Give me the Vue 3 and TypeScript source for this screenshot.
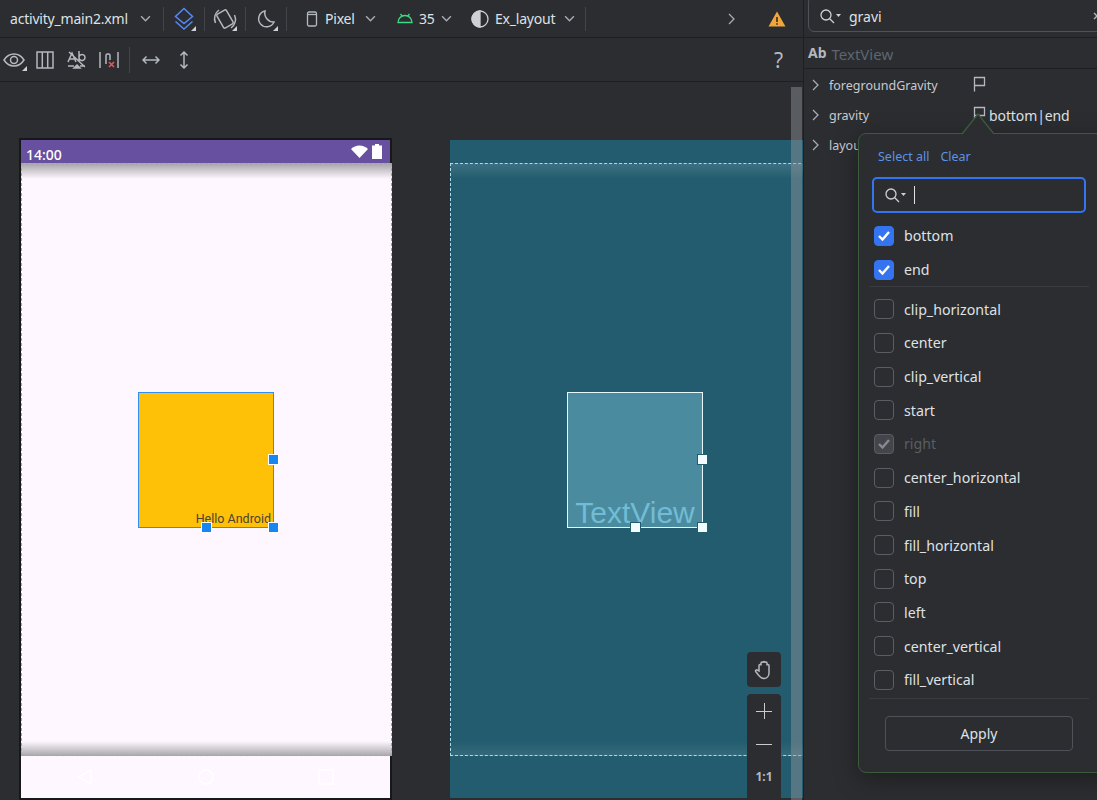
<template>
  <div class="ide">
    <section class="editor">
      <div class="toolbar top">
        <span class="label file">activity_main2.xml</span>
        <svg class="chev" viewBox="0 0 10 6"><path d="M1 1l4 4 4-4" /></svg>
        <i class="sep first"></i>
        <div class="tool">
          <svg width="20" height="24" viewBox="0 0 20 24" class="blue">
            <path d="M10 1.500l8.500 8-8.500 7-8.500-7z" />
            <path d="M1.500 14.500l8.500 7.500 8.500-7.500" />
          </svg>
          <b class="corner"></b>
        </div>
        <i class="sep"></i>
        <div class="tool">
          <svg width="24" height="24" viewBox="0 0 24 24" class="line">
            <rect x="6.500" y="4" width="11" height="16" rx="1.500" transform="rotate(-30 12 12)" />
            <path d="M2.500 16a10.500 10.500 0 0 1 3.500-13M21.500 8a10.500 10.500 0 0 1-3.500 13" />
          </svg>
          <b class="corner"></b>
        </div>
        <i class="sep"></i>
        <div class="tool">
          <svg width="20" height="20" viewBox="0 0 20 20" class="line">
            <path d="M9 2a8 8 0 1 0 9 11A9 9 0 0 1 9 2z" />
          </svg>
          <b class="corner"></b>
        </div>
        <i class="sep"></i>
        <svg class="device" width="12" height="16" viewBox="0 0 12 16"><rect x="1.500" y="1" width="9" height="14" rx="1.500" /><path d="M1.500 3.500h9" /></svg>
        <span class="label pixel">Pixel</span>
        <svg class="chev after-pixel" viewBox="0 0 10 6"><path d="M1 1l4 4 4-4" /></svg>
        <svg class="droid" width="16" height="11" viewBox="0 0 16 11"><path d="M1 9.500h14A7 7 0 0 0 1 9.500zM3.500 1l2 2.500M12.500 1l-2 2.500" /></svg>
        <span class="label api">35</span>
        <svg class="chev after-api" viewBox="0 0 10 6"><path d="M1 1l4 4 4-4" /></svg>
        <svg class="contrast" width="18" height="18" viewBox="0 0 18 18"><circle cx="9" cy="9" r="8" /><path d="M9 1a8 8 0 0 0 0 16z" /></svg>
        <span class="label theme">Ex_layout</span>
        <svg class="chev after-theme" viewBox="0 0 10 6"><path d="M1 1l4 4 4-4" /></svg>
        <i class="sep last"></i>
        <svg class="more" width="7" height="12" viewBox="0 0 7 12"><path d="M1 1l5 5-5 5" /></svg>
        <svg class="warn" width="18" height="16" viewBox="0 0 18 16"><path d="M9 0.500L17.500 15.500H0.500z" /><path class="mark" d="M9 6v5M9 12.200v1.600" /></svg>
      </div>

      <div class="toolbar second">
        <div class="mini eye">
          <svg width="22" height="16" viewBox="0 0 22 16" class="line"><path d="M1 8c5-8 15-8 20 0-5 8-15 8-20 0z" /><circle cx="11" cy="8" r="3.500" /></svg>
          <b class="corner"></b>
        </div>
        <div class="mini">
          <svg width="18" height="18" viewBox="0 0 18 18" class="line"><rect x="1" y="1" width="16" height="16" /><path d="M6.300 1v16M11.700 1v16" /></svg>
        </div>
        <div class="mini">
          <svg width="20" height="20" viewBox="0 0 20 20" class="line">
            <path d="M1 12l4-9 4 9M2.500 9h5M12 1v10M12 7.500a3 3 0 1 1 0 .1M2 2l16 15M1 16h6M13 16h5" />
            <path class="tip" d="M7 18l3-3 3 3z" />
          </svg>
        </div>
        <div class="mini">
          <svg width="20" height="18" viewBox="0 0 20 18" class="line">
            <path d="M1 1v16M19 1v16M7 13V4.500a1.500 1.500 0 0 1 1.500-1.500h1a1.500 1.500 0 0 1 1.500 1.500V9" />
            <path class="cross" d="M10 11l5 5M15 11l-5 5" />
          </svg>
        </div>
        <i class="sep short"></i>
        <div class="mini arrow">
          <svg width="18" height="10" viewBox="0 0 18 10" class="line"><path d="M1 5h16M4.500 1.500L1 5l3.500 3.500M13.500 1.500L17 5l-3.500 3.500" /></svg>
        </div>
        <div class="mini arrow">
          <svg width="10" height="18" viewBox="0 0 10 18" class="line"><path d="M5 1v16M1.500 4.500L5 1l3.500 3.500M1.500 13.500L5 17l3.500-3.500" /></svg>
        </div>
        <span class="help">?</span>
      </div>

      <div class="canvas">
        <div class="phone design">
          <div class="statusbar">
            <span class="clock">14:00</span>
            <div class="status-icons">
              <svg width="17" height="13" viewBox="0 0 17 13"><path d="M0 4a12 12 0 0 1 17 0L8.500 13z" /></svg>
              <svg width="10" height="15" viewBox="0 0 10 15"><path d="M3 0h4v1.500h3V15H0V1.500h3z" /></svg>
            </div>
          </div>
          <div class="screen">
            <div class="view">
              <span class="hello">Hello Android</span>
              <b class="handle right"></b>
              <b class="handle bottom"></b>
              <b class="handle both"></b>
            </div>
          </div>
          <div class="navbar">
            <svg width="16" height="16" viewBox="0 0 16 16"><path d="M14 1v14L1.500 8z" /></svg>
            <svg width="16" height="16" viewBox="0 0 16 16"><circle cx="8" cy="8" r="7" /></svg>
            <svg width="16" height="16" viewBox="0 0 16 16"><rect x="1" y="1" width="14" height="14" /></svg>
          </div>
        </div>

        <div class="phone blueprint">
          <div class="bp-status"></div>
          <div class="screen">
            <div class="view">
              <span class="bp-text">TextView</span>
              <b class="handle right"></b>
              <b class="handle bottom"></b>
              <b class="handle both"></b>
            </div>
          </div>
        </div>

        <div class="scrollbar"></div>

        <div class="zoom-tools">
          <div class="zoom-box hand">
            <svg width="20" height="20" viewBox="0 0 20 20" class="line">
              <path d="M5 11V5.500a1 1 0 0 1 2 0V3a1 1 0 0 1 2 0v-.500a1 1 0 0 1 2 0V3a1 1 0 0 1 2 0v2.500a1 1 0 0 1 2 0V13c0 3-2 5.500-5 5.500-3.500 0-4.500-2-6-4L1.700 11.500c-.7-1.200.8-2.300 1.800-1.300z" />
            </svg>
          </div>
          <div class="zoom-box controls">
            <span class="plus"></span>
            <span class="minus"></span>
            <span class="ratio">1:1</span>
          </div>
        </div>
      </div>
    </section>

    <aside class="attributes">
      <div class="search-row">
        <div class="search-field">
          <svg class="search" width="24" height="16" viewBox="0 0 24 16"><circle cx="7" cy="7" r="5" /><path d="M10.500 10.500L15 15" /><path class="drop" d="M17 6h5l-2.500 3z" /></svg>
          <span>gravi</span>
          <svg class="clear" width="8" height="8" viewBox="0 0 8 8"><path d="M1 1l6 6M7 1L1 7" /></svg>
        </div>
      </div>
      <div class="component-row">
        <b>Ab</b>
        <span>TextView</span>
      </div>
      <div v-for="attr in attrs" :key="attr.name" class="attr-row">
        <svg class="expand" width="7" height="12" viewBox="0 0 7 12"><path d="M1 1l5 5-5 5" /></svg>
        <span class="attr-name">{{ attr.name }}</span>
        <svg v-if="attr.flag" class="flag" width="13" height="16" viewBox="0 0 13 16"><path d="M1.500 15.500V1.500h10v8h-10" /></svg>
        <span class="attr-value">{{ attr.value }}</span>
      </div>

      <div class="popup">
        <svg class="beak" width="34" height="22" viewBox="0 0 34 22"><path d="M1 21L17 1l16 20" /></svg>
        <div class="popup-links">
          <a>Select all</a>
          <a>Clear</a>
        </div>
        <div class="flag-search">
          <svg class="search" width="24" height="16" viewBox="0 0 24 16"><circle cx="7" cy="7" r="5" /><path d="M10.500 10.500L15 15" /><path class="drop" d="M17 6h5l-2.500 3z" /></svg>
          <i class="caret"></i>
        </div>
        <div class="flag-list">
          <label v-for="item in selected" :key="item" class="flag-row">
            <span class="box on">
              <svg width="14" height="12" viewBox="0 0 14 12"><path d="M2 6l3.500 3.500L12 2" /></svg>
            </span>
            {{ item }}
          </label>
        </div>
        <hr />
        <div class="flag-list rest">
          <label v-for="item in options" :key="item" class="flag-row" :class="{ implied: item === 'right' }">
            <span class="box">
              <svg v-if="item === 'right'" width="14" height="12" viewBox="0 0 14 12"><path d="M2 6l3.500 3.500L12 2" /></svg>
            </span>
            {{ item }}
          </label>
        </div>
        <hr />
        <button class="apply">Apply</button>
      </div>
    </aside>
  </div>
</template>

<script setup lang="ts">
const attrs = [
  { name: 'foregroundGravity', value: '', flag: true },
  { name: 'gravity', value: 'bottom|end', flag: true },
  { name: 'layout_gravity', value: '', flag: false }
]

const selected = ['bottom', 'end']

const options = [
  'clip_horizontal',
  'center',
  'clip_vertical',
  'start',
  'right',
  'center_horizontal',
  'fill',
  'fill_horizontal',
  'top',
  'left',
  'center_vertical',
  'fill_vertical'
]
</script>

<style>
html,
body {
  margin: 0;
  background: #2b2d30;
}
</style>

<style scoped>
.ide {
  display: flex;
  width: 1097px;
  height: 800px;
  overflow: hidden;
  background: #2b2d30;
  color: #dfe1e5;
  font-family: "Noto Sans", "Open Sans", sans-serif;
  font-size: 14px;
}

.editor {
  display: flex;
  flex-direction: column;
  flex: none;
  width: 803px;
  border-right: 1px solid #1e1f22;
}

.toolbar {
  display: flex;
  align-items: center;
  flex: none;
  border-bottom: 1px solid #1e1f22;
}

.top {
  height: 37px;
  padding-left: 10px;
}

.second {
  height: 43px;
}

svg path,
svg rect,
svg circle {
  fill: none;
  stroke-width: 1.300;
}

.label {
  white-space: nowrap;
  letter-spacing: -0.2px;
}

.file {
  width: 123px;
}

.chev {
  width: 11px;
  height: 7px;
  margin-left: 7px;
  flex: none;
}

.chev path {
  stroke: #a8adb5;
}

.sep {
  flex: none;
  width: 1px;
  height: 24px;
  background: #43454a;
}

.first {
  margin-left: 12px;
}

.tool {
  position: relative;
  display: flex;
  align-items: center;
  justify-content: center;
  width: 40px;
  height: 26px;
}

.corner {
  position: absolute;
  right: 8px;
  bottom: 1px;
  width: 0;
  height: 0;
  border-left: 5px solid transparent;
  border-bottom: 5px solid #ced0d6;
}

.blue path {
  stroke: #548af7;
  stroke-width: 1.500;
}

.line path,
.line rect,
.line circle {
  stroke: #b4b8bf;
  stroke-width: 1.500;
}

.device {
  margin-left: 19px;
}

.device rect,
.device path {
  stroke: #b4b8bf;
}

.pixel {
  width: 33px;
  margin-left: 7px;
}

.after-pixel {
  margin-left: 7px;
}

.droid {
  margin-left: 21px;
}

.droid path {
  stroke: #3ddc84;
}

.api {
  width: 15px;
  margin-left: 6px;
}

.after-api {
  margin-left: 7px;
}

.contrast {
  margin-left: 19px;
}

.contrast circle {
  stroke: #ced0d6;
}

.contrast path {
  fill: #ced0d6;
  stroke: #ced0d6;
}

.theme {
  width: 63px;
  margin-left: 6px;
}

.after-theme {
  margin-left: 6px;
}

.last {
  margin-left: 10px;
}

.more {
  margin-left: 142px;
}

.more path,
.expand path {
  stroke: #a8adb5;
}

.warn {
  margin-left: 33px;
}

.warn > path {
  fill: #f2a53a;
  stroke: none;
}

.warn .mark {
  fill: none;
  stroke: #2b2d30;
  stroke-width: 1.600;
}

.mini {
  position: relative;
  display: flex;
  align-items: center;
  justify-content: center;
  flex: none;
  width: 32px;
  height: 26px;
}

.eye {
  width: 28px;
  margin-right: 1px;
}

.eye .corner {
  right: 1px;
  bottom: 2px;
}

.tip {
  fill: #b4b8bf;
  stroke: none;
}

.line .cross {
  stroke: #db5c5c;
  stroke-width: 1.600;
}

.short {
  height: 26px;
  margin: 0 4px;
}

.arrow {
  width: 33px;
}

.help {
  margin-left: 574px;
  color: #b4b8bf;
  font-size: 21px;
}

.canvas {
  position: relative;
  display: flex;
  flex: 1;
  gap: 60px;
  min-height: 0;
  padding: 58px 0 0 21px;
  overflow: hidden;
}

.phone {
  display: flex;
  flex-direction: column;
  flex: none;
  width: 369px;
  height: 658px;
}

.design {
  background: #fef7ff;
  box-shadow: 0 0 0 2px #17181a;
}

.statusbar {
  display: flex;
  align-items: center;
  justify-content: space-between;
  flex: none;
  height: 23px;
  padding: 0 8px 0 5px;
  background: #67509f;
  color: #fff;
  font-size: 14px;
  font-weight: 500;
}

.clock {
  padding-top: 5px;
}

.status-icons {
  display: flex;
  align-items: center;
  gap: 4px;
}

.status-icons path {
  fill: #fff;
  stroke: none;
}

.screen {
  display: flex;
  align-items: center;
  justify-content: center;
  flex: none;
  box-sizing: border-box;
  width: 371px;
  height: 593px;
  padding: 1px 1px 0 0;
  border: 1px dashed #a5a5a8;
}

.design .screen {
  background: linear-gradient(#a9a7ab, #fef7ff 15px, #fef7ff 577px, #aeacb0);
}

.view {
  position: relative;
  display: flex;
  align-items: flex-end;
  justify-content: flex-end;
  flex: none;
  box-sizing: border-box;
  width: 136px;
  height: 136px;
}

.design .view {
  background: #ffc107;
  border: 1.500px solid #2d8ff0;
}

.hello {
  padding: 0 2px 1px 0;
  color: #4b4330;
  font-family: Roboto, "Noto Sans", sans-serif;
  font-size: 12.500px;
  line-height: 14px;
  white-space: nowrap;
}

.handle {
  position: absolute;
  width: 9px;
  height: 9px;
  background: #1886f0;
  border: 1px solid #fff;
}

.right {
  right: -6px;
  top: 61px;
}

.bottom {
  right: 61px;
  bottom: -6px;
}

.both {
  right: -6px;
  bottom: -6px;
}

.navbar {
  display: flex;
  align-items: center;
  justify-content: space-between;
  flex: 1;
  padding: 0 56px;
}

.navbar path,
.navbar circle,
.navbar rect {
  stroke: #fff;
  stroke-width: 1.500;
}

.blueprint {
  background: #235c6e;
}

.bp-status {
  flex: none;
  height: 23px;
}

.blueprint .screen {
  border-color: #a8dcea;
  background: linear-gradient(#3c7082, #235c6e 15px, #235c6e 577px, #34697a);
}

.blueprint .view {
  justify-content: center;
  background: #4a8ba0;
  border: 1.500px solid #e8f7fc;
}

.blueprint .handle {
  background: #f2fbff;
  border-color: #235c6e;
}

.bp-text {
  color: #72bcd5;
  font-family: "Liberation Sans", sans-serif;
  font-size: 30px;
  line-height: 29px;
}

.scrollbar {
  position: absolute;
  top: 5px;
  right: 1px;
  bottom: 0;
  width: 11px;
  background: rgba(146, 150, 155, 0.45);
}

.zoom-tools {
  position: absolute;
  top: 570px;
  left: 747px;
  display: flex;
  flex-direction: column;
  gap: 7px;
}

.zoom-box {
  box-sizing: border-box;
  width: 34px;
  background: #2b2d30;
  border-radius: 4px;
}

.hand {
  display: flex;
  align-items: center;
  justify-content: center;
  height: 35px;
}

.controls {
  position: relative;
  height: 120px;
}

.plus {
  position: absolute;
  top: 9px;
  left: 9px;
  width: 16px;
  height: 16px;
  background:
    linear-gradient(#c9cbd0, #c9cbd0) center / 16px 1px no-repeat,
    linear-gradient(#c9cbd0, #c9cbd0) center / 1px 16px no-repeat;
}

.minus {
  position: absolute;
  top: 50px;
  left: 9px;
  width: 16px;
  height: 1px;
  background: #c9cbd0;
}

.ratio {
  position: absolute;
  top: 74px;
  left: 0;
  width: 100%;
  color: #b4b8bf;
  font-size: 12px;
  font-weight: 700;
  line-height: 18px;
  text-align: center;
}

.attributes {
  position: relative;
  flex: 1;
  min-width: 0;
}

.search-row {
  box-sizing: border-box;
  height: 38px;
  overflow: hidden;
  border-bottom: 1px solid #1e1f22;
}

.search-field {
  display: flex;
  align-items: center;
  gap: 6px;
  box-sizing: border-box;
  width: 299px;
  height: 36px;
  margin: -4px 0 0 4px;
  padding: 4px 5px 0 10px;
  border: 1px solid #4e5157;
  border-radius: 6px;
}

.clear {
  margin-left: auto;
}

.clear path {
  stroke: #b4b8bf;
}

.search circle,
.search > path {
  stroke: #ced0d6;
}

.search .drop {
  fill: #ced0d6;
  stroke: none;
}

.component-row {
  display: flex;
  align-items: center;
  gap: 5px;
  box-sizing: border-box;
  height: 31px;
  padding: 1px 0 0 4px;
  border-bottom: 1px solid #1e1f22;
}

.component-row b {
  margin-top: -2px;
  color: #b4b8bf;
  font-size: 14px;
}

.component-row span {
  color: #5e6670;
  font-size: 15px;
}

.attr-row {
  display: flex;
  align-items: center;
  height: 30px;
  padding: 2px 0 0 8px;
  box-sizing: border-box;
  white-space: nowrap;
}

.attr-row:first-of-type {
  margin-top: 1px;
}

.expand {
  flex: none;
}

.attr-name {
  width: 144px;
  margin-left: 10px;
  font-size: 12.500px;
  color: #c7cad0;
}

.flag {
  flex: none;
  margin: -3px 3px 0 0;
}

.flag path {
  stroke: #b4b8bf;
}

.attr-value {
  font-size: 14px;
  letter-spacing: -0.1px;
}

.popup {
  position: absolute;
  top: 133px;
  left: 54px;
  box-sizing: border-box;
  width: 260px;
  height: 640px;
  padding: 14px 24px 0 13px;
  background: #2b2d30;
  border: 1px solid #3c5a3c;
  border-radius: 8px;
  box-shadow: 0 6px 24px rgba(0, 0, 0, 0.35);
}

.beak {
  position: absolute;
  top: -21px;
  left: 102px;
}

.beak path {
  fill: #2b2d30;
  stroke: #3c5a3c;
}

.popup-links {
  display: flex;
  gap: 11px;
  padding-left: 6px;
  height: 18px;
  color: #5c93ea;
  font-size: 12.500px;
  line-height: 18px;
}

.flag-search {
  display: flex;
  align-items: center;
  gap: 6px;
  box-sizing: border-box;
  width: 214px;
  height: 36px;
  margin-top: 11px;
  padding-left: 10px;
  border: 2px solid #3574f0;
  border-radius: 5px;
}

.caret {
  width: 1px;
  height: 18px;
  background: #dfe1e5;
}

.flag-list {
  margin-top: 6px;
}

.rest {
  margin: 5px 0 1px;
}

.flag-row {
  display: flex;
  align-items: center;
  gap: 10px;
  height: 33.700px;
  font-size: 14.200px;
}

.box {
  display: flex;
  align-items: center;
  justify-content: center;
  flex: none;
  box-sizing: border-box;
  width: 20px;
  height: 20px;
  margin-left: 2px;
  border: 1px solid #5a5d63;
  border-radius: 4px;
}

.box path {
  stroke: #fff;
  stroke-width: 2.400;
}

.box.on {
  background: #3574f0;
  border-color: #3574f0;
}

.implied {
  color: #5a5d63;
}

.implied .box {
  background: #43454a;
  border-color: #5a5d63;
}

.implied .box path {
  stroke: #868a91;
}

hr {
  width: 220px;
  height: 1px;
  margin: 0 0 0 -3px;
  background: #393b40;
  border: none;
}

.apply {
  display: block;
  width: 188px;
  height: 35px;
  margin: 17px 0 0 13px;
  color: #dfe1e5;
  background: transparent;
  border: 1px solid #4e5157;
  border-radius: 4px;
  font-family: inherit;
  font-size: 14px;
}
</style>
